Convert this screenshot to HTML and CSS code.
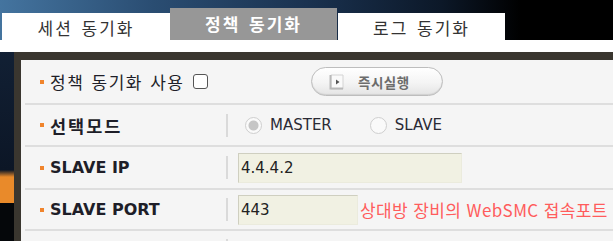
FILE: index.html
```html
<!DOCTYPE html>
<html lang="ko">
<head>
    <meta charset="UTF-8">
    <title>정책 동기화</title>
    <link rel="stylesheet" href="styles.css">
</head>
<body>

    <div class="tabs">
        <div class="tab">세션 동기화</div>
        <div class="tab active">정책 동기화</div>
        <div class="tab">로그 동기화</div>
    </div>

    <div class="strip"></div>

    <div class="panel">

        <div class="row first">
            <div class="label"><span class="dot"></span>정책 동기화 사용<span class="check"></span></div>
            <div class="run">
                <span class="run-icon">
                    <svg width="17" height="18" viewBox="0 0 17 18">
                        <path d="M3 2 H15 V16 H3 Z" fill="#fafafa" stroke="#d4d4d4" stroke-width="1"/>
                        <path d="M2.5 2 V15.5 H15" fill="none" stroke="#b9b9b9" stroke-width="2"/>
                        <path d="M8 6.5 L11.5 9 L8 11.5 Z" fill="#555"/>
                    </svg>
                </span>
                즉시실행
            </div>
        </div>

        <div class="row second">
            <div class="label bold"><span class="dot"></span>선택모드</div>
            <div class="bar"></div>
            <div class="modes">
                <span class="radio on"></span><span class="mode">MASTER</span>
                <span class="radio"></span><span class="mode">SLAVE</span>
            </div>
        </div>

        <div class="row third">
            <div class="label latin"><span class="dot"></span>SLAVE IP</div>
            <div class="bar"></div>
            <div class="field wide">4.4.4.2</div>
        </div>

        <div class="row fourth">
            <div class="label latin"><span class="dot"></span>SLAVE PORT</div>
            <div class="bar"></div>
            <div class="field">443</div>
            <span class="note">상대방 장비의 WebSMC 접속포트</span>
        </div>

        <div class="row last">
            <div class="label"></div>
            <div class="bar"></div>
        </div>

    </div>

</body>
</html>
```

FILE: styles.css
```css
html, body {
    margin: 0;
    width: 613px;
    height: 241px;
    overflow: hidden;
}

body {
    font-family: "DejaVu Sans", "Noto Sans CJK KR", sans-serif;
    background: linear-gradient(to bottom, #14243a 0, #0c1626 170px, #e98a2a 177px, #e98a2a 203px, #05070a 203px);
}

.tabs {
    display: flex;
    align-items: flex-end;
    height: 40px;
    padding-left: 2px;
    background: linear-gradient(90deg, #44749f 0%, #2a4d72 25%, #1a3250 50%, #0c1828 72%, #000 85%);
}

.tab {
    width: 168px;
    height: 27px;
    background: #fff;
    color: #333;
    font-family: "Noto Sans CJK KR", sans-serif;
    font-size: 17px;
    letter-spacing: 2px;
    word-spacing: 2px;
    line-height: 30px;
    text-align: center;
}

.tab.active {
    width: 167px;
    height: 32px;
    margin-right: 1px;
    background: #979797;
    color: #fff;
    font-weight: bold;
    line-height: 31px;
}

.tab:last-child {
    width: 167px;
}

.strip {
    height: 12px;
    background: #fff;
}

.panel {
    height: 181px;
    overflow: hidden;
    margin-left: 14px;
    border-left: 7px solid #3a362f;
    border-top: 8px solid #3a362f;
    background: #f5f5f5;
}

.row {
    display: flex;
    align-items: center;
    box-sizing: border-box;
    margin-left: 4px;
    border-bottom: 2px solid #dedede;
    white-space: nowrap;
}

.first { height: 45px; }
.second { height: 42px; }
.third { height: 43px; }
.fourth { height: 41px; }
.last { height: 40px; }

.label {
    display: flex;
    flex-shrink: 0;
    align-items: center;
    box-sizing: border-box;
    width: 201px;
    padding-left: 15px;
    color: #1e1e28;
    font-family: "Noto Sans CJK KR", sans-serif;
    font-size: 17px;
    letter-spacing: 1.5px;
    word-spacing: 1px;
}

.first .label {
    width: 286px;
}

.label.bold {
    font-weight: bold;
    font-size: 17.5px;
    letter-spacing: 2px;
}

.label.latin {
    font-family: "DejaVu Sans", sans-serif;
    font-weight: bold;
    font-size: 16px;
    letter-spacing: 0;
    word-spacing: 0;
}

.dot {
    width: 4px;
    height: 4px;
    margin-right: 6px;
    background: #f0842c;
}

.check {
    width: 13px;
    height: 13px;
    margin-left: 8px;
    border: 1.5px solid #555;
    border-radius: 3px;
    background: #fff;
}

.run {
    display: flex;
    flex-shrink: 0;
    align-items: center;
    box-sizing: border-box;
    width: 132px;
    height: 29px;
    padding-left: 16px;
    border: 1px solid #bdbdbd;
    border-radius: 15px;
    background: linear-gradient(#ffffff, #f4f4f4 55%, #e4e4e4);
    box-shadow: inset 0 -1px 1px #d0d0d0;
    color: #6c6c6c;
    font-family: "Noto Sans CJK KR", sans-serif;
    font-size: 13.5px;
    font-weight: bold;
    letter-spacing: 0.5px;
}

.run-icon {
    display: flex;
    margin-right: 13px;
}

.bar {
    flex-shrink: 0;
    width: 2px;
    height: 23px;
    background: #dadada;
}

.modes {
    display: flex;
    align-items: center;
    padding-left: 17px;
}

.radio {
    box-sizing: border-box;
    width: 17px;
    height: 17px;
    margin-right: 8px;
    border: 1.5px solid #cfcfcf;
    border-radius: 50%;
    background: #fafafa;
}

.radio.on {
    background: radial-gradient(circle, #c6c6c6 0, #c6c6c6 4.5px, #fafafa 5.5px);
}

.mode {
    margin-right: 38px;
    color: #2a2a34;
    font-size: 15px;
}

.field {
    flex-shrink: 0;
    box-sizing: border-box;
    width: 120px;
    height: 30px;
    margin-left: 10px;
    padding-left: 2px;
    border: 1px solid;
    border-color: #cfcfc0 #ebebdd #ebebdd #cfcfc0;
    background: #f1f1e3;
    color: #222;
    font-size: 15px;
    line-height: 28px;
}

.field.wide {
    width: 224px;
}

.note {
    margin-left: 2px;
    color: #ff5c5c;
    font-family: "Noto Sans CJK KR", sans-serif;
    font-size: 17px;
    letter-spacing: 0.4px;
}
```
